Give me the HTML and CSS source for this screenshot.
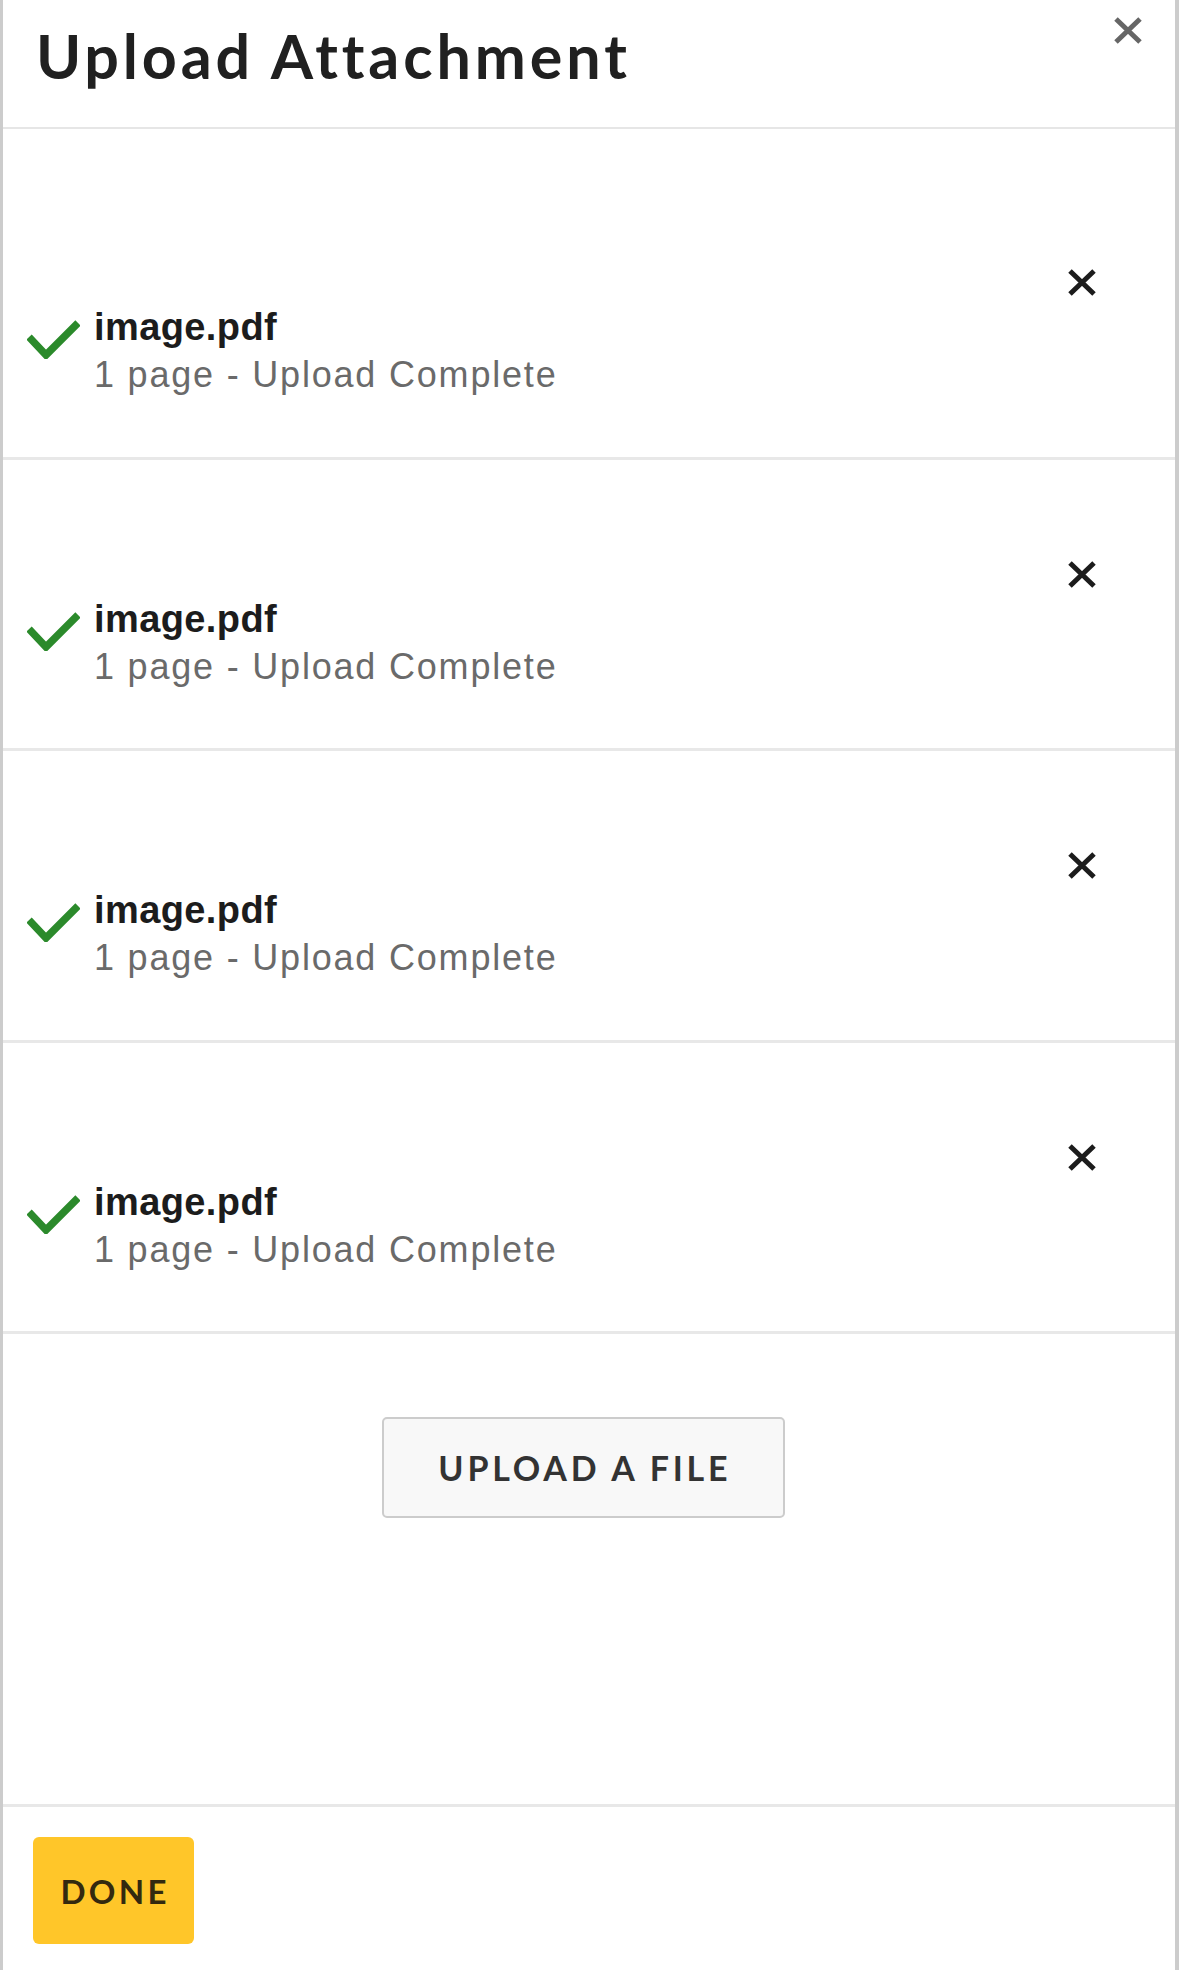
FILE: index.html
```html
<!DOCTYPE html>
<html>
<head>
<meta charset="utf-8">
<link rel="stylesheet" href="styles.css">
</head>
<body>
<div class="modal">
  <header class="header">
    <h1 class="title">Upload Attachment</h1>
    <button class="close" aria-label="Close">
      <svg width="30" height="29" viewBox="0 0 30 29"><path d="M3 3L27 26M27 3L3 26" stroke="#666" stroke-width="5"/></svg>
    </button>
  </header>
  <div class="list">
    <div class="row">
      <div class="item">
        <svg class="check" width="53" height="39" viewBox="0 0 53 39"><path d="M2 17L19 35L51 3" fill="none" stroke="#2b8a2b" stroke-width="7.5"/></svg>
        <div class="info">
          <div class="name">image.pdf</div>
          <div class="meta">1 page - Upload Complete</div>
        </div>
      </div>
      <button class="remove" aria-label="Remove"><svg width="30" height="29" viewBox="0 0 30 29"><path d="M3 3L27 26M27 3L3 26" stroke="#1c1c1c" stroke-width="5"/></svg></button>
    </div>
    <div class="row">
      <div class="item">
        <svg class="check" width="53" height="39" viewBox="0 0 53 39"><path d="M2 17L19 35L51 3" fill="none" stroke="#2b8a2b" stroke-width="7.5"/></svg>
        <div class="info">
          <div class="name">image.pdf</div>
          <div class="meta">1 page - Upload Complete</div>
        </div>
      </div>
      <button class="remove" aria-label="Remove"><svg width="30" height="29" viewBox="0 0 30 29"><path d="M3 3L27 26M27 3L3 26" stroke="#1c1c1c" stroke-width="5"/></svg></button>
    </div>
    <div class="row">
      <div class="item">
        <svg class="check" width="53" height="39" viewBox="0 0 53 39"><path d="M2 17L19 35L51 3" fill="none" stroke="#2b8a2b" stroke-width="7.5"/></svg>
        <div class="info">
          <div class="name">image.pdf</div>
          <div class="meta">1 page - Upload Complete</div>
        </div>
      </div>
      <button class="remove" aria-label="Remove"><svg width="30" height="29" viewBox="0 0 30 29"><path d="M3 3L27 26M27 3L3 26" stroke="#1c1c1c" stroke-width="5"/></svg></button>
    </div>
    <div class="row">
      <div class="item">
        <svg class="check" width="53" height="39" viewBox="0 0 53 39"><path d="M2 17L19 35L51 3" fill="none" stroke="#2b8a2b" stroke-width="7.5"/></svg>
        <div class="info">
          <div class="name">image.pdf</div>
          <div class="meta">1 page - Upload Complete</div>
        </div>
      </div>
      <button class="remove" aria-label="Remove"><svg width="30" height="29" viewBox="0 0 30 29"><path d="M3 3L27 26M27 3L3 26" stroke="#1c1c1c" stroke-width="5"/></svg></button>
    </div>
  </div>
  <div class="upload">
    <button class="upload-btn">UPLOAD A FILE</button>
  </div>
  <footer class="footer">
    <button class="done">DONE</button>
  </footer>
</div>
</body>
</html>
```

FILE: styles.css
```css
html, body {
  margin: 0;
  padding: 0;
  background: #ffffff;
}
.modal {
  width: 1179px;
  height: 1970px;
  box-sizing: border-box;
  border-left: 3px solid #cccccc;
  border-right: 4px solid #cccccc;
  display: flex;
  flex-direction: column;
  background: #ffffff;
}
button {
  border: 0;
  background: none;
  padding: 0;
  margin: 0;
  cursor: pointer;
}
.header {
  height: 129px;
  box-sizing: border-box;
  border-bottom: 2px solid #e6e6e6;
  display: flex;
  justify-content: space-between;
  align-items: flex-start;
  flex: none;
}
.title {
  margin: 25px 0 0 33px;
  font-family: Lato, "Noto Sans", sans-serif;
  font-weight: 700;
  font-size: 61px;
  line-height: 61px;
  letter-spacing: 3.9px;
  color: #202020;
}
.close {
  margin: 16px 32px 0 0;
  width: 30px;
  height: 29px;
  display: block;
}
.close svg, .remove svg { display: block; }
.list {
  padding-top: 39px;
  flex: none;
}
.row {
  display: flex;
  justify-content: space-between;
  align-items: flex-start;
  padding: 100px 78px 57.6px 24px;
  border-bottom: 3px solid #e8e8e8;
}
.item {
  display: flex;
  align-items: flex-start;
  margin-top: 35px;
  gap: 14px;
}
.check {
  display: block;
  margin-top: 17px;
}
.info {
  font-family: "Liberation Sans", Arial, sans-serif;
}
.name {
  font-weight: 700;
  font-size: 38px;
  line-height: 48px;
  letter-spacing: 0.4px;
  color: #1c1c1c;
}
.meta {
  font-size: 36px;
  line-height: 48px;
  letter-spacing: 1.8px;
  color: #6a6a6a;
}
.remove {
  width: 30px;
  height: 29px;
  display: block;
}
.upload {
  flex: 1;
  display: flex;
  justify-content: center;
  align-items: flex-start;
  padding-top: 83px;
  padding-right: 12px;
}
.upload-btn {
  width: 403px;
  height: 101px;
  box-sizing: border-box;
  border: 2px solid #cccccc;
  border-radius: 5px;
  background: #f8f8f8;
  font-family: Lato, "Noto Sans", sans-serif;
  font-weight: 700;
  font-size: 34px;
  letter-spacing: 3.8px;
  padding-left: 3.8px;
  color: #333333;
  display: flex;
  align-items: center;
  justify-content: center;
}
.footer {
  flex: none;
  height: 166px;
  box-sizing: border-box;
  border-top: 3px solid #e8e8e8;
  padding: 30px 0 0 30px;
}
.done {
  width: 161px;
  height: 107px;
  border-radius: 6px;
  background: #ffc629;
  font-family: Lato, "Noto Sans", sans-serif;
  font-weight: 700;
  font-size: 33px;
  letter-spacing: 3.3px;
  padding-left: 3.3px;
  color: #33290f;
  display: flex;
  align-items: center;
  justify-content: center;
}
```
